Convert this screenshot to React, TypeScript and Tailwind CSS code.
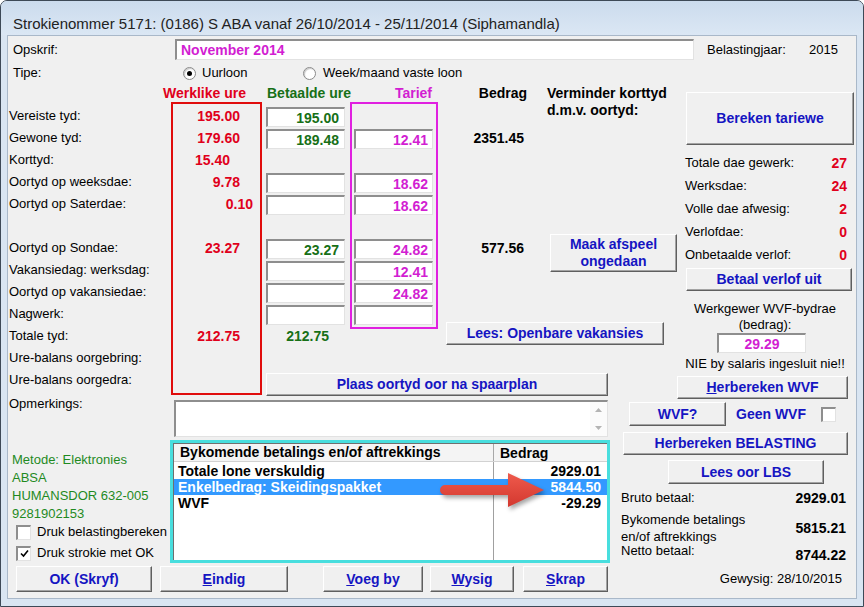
import React from "react";

const RED = "text-[#e0001b]";
const GREEN = "text-[#177017]";
const MAG = "text-[#d21ed2]";

function Btn({ children, className = "" }: { children: React.ReactNode; className?: string }) {
  return (
    <div
      className={`flex shrink-0 items-center justify-center border border-t-white border-l-white border-r-[#5f5f5f] border-b-[#5f5f5f] bg-[#f0f0f0] text-center text-[14px] font-bold leading-[17px] text-[#1515c2] shadow-[inset_-1px_-1px_0_#a3a3a3] ${className}`}
    >
      {children}
    </div>
  );
}

function Field({ value = "", className = "" }: { value?: string; className?: string }) {
  return (
    <div
      className={`flex h-5 items-center border-t-2 border-l-2 border-r border-b border-t-[#8e8e8e] border-l-[#8e8e8e] border-r-[#e2e2e2] border-b-[#e2e2e2] bg-white text-[14px] font-bold leading-none ${className}`}
    >
      {value}
    </div>
  );
}

function Check({ checked = false }: { checked?: boolean }) {
  return (
    <div className="flex h-[15px] w-[15px] shrink-0 items-center justify-center border-t-2 border-l-2 border-r border-b border-t-[#8e8e8e] border-l-[#8e8e8e] border-r-[#e2e2e2] border-b-[#e2e2e2] bg-white">
      {checked && (
        <svg width="9" height="9" viewBox="0 0 9 9">
          <path d="M1 4.5 L3.5 7 L8 1.5" fill="none" stroke="#000" strokeWidth="1.6" />
        </svg>
      )}
    </div>
  );
}

function Radio({ on = false }: { on?: boolean }) {
  return (
    <div className="flex h-[13px] w-[13px] shrink-0 items-center justify-center rounded-full border border-[#8a8a8a] bg-white shadow-[inset_1px_1px_1px_#c8c8c8]">
      {on && <div className="h-[5px] w-[5px] rounded-full bg-black" />}
    </div>
  );
}

const labels = [
  "Vereiste tyd:",
  "Gewone tyd:",
  "Korttyd:",
  "Oortyd op weeksdae:",
  "Oortyd op Saterdae:",
  "",
  "Oortyd op Sondae:",
  "Vakansiedag: werksdag:",
  "Oortyd op vakansiedae:",
  "Nagwerk:",
  "Totale tyd:",
  "Ure-balans oorgebring:",
  "Ure-balans oorgedra:",
];

const werklik: ([string, string] | null)[] = [
  ["195.00", "pr-[20px]"],
  ["179.60", "pr-[20px]"],
  ["15.40", "pr-[30px]"],
  ["9.78", "pr-[20px]"],
  ["0.10", "pr-[7px]"],
  null,
  ["23.27", "pr-[20px]"],
  null,
  null,
  null,
  ["212.75", "pr-[20px]"],
  null,
  null,
];

// string = input with that value, null = nothing
const betaal: (string | null)[] = ["195.00", "189.48", null, "", "", null, "23.27", "", "", ""];
const tarief: (string | null)[] = [null, "12.41", null, "18.62", "18.62", null, "24.82", "12.41", "24.82", ""];

const stats = [
  ["Totale dae gewerk:", "27"],
  ["Werksdae:", "24"],
  ["Volle dae afwesig:", "2"],
  ["Verlofdae:", "0"],
  ["Onbetaalde verlof:", "0"],
];

const items = [
  { name: "Totale lone verskuldig", amount: "2929.01", sel: false },
  { name: "Enkelbedrag: Skeidingspakket", amount: "5844.50", sel: true },
  { name: "WVF", amount: "-29.29", sel: false },
];

export default function App() {
  return (
    <div className="h-[607px] w-[864px] overflow-hidden bg-white font-['Liberation_Sans',Arial,sans-serif]">
      <div className="flex h-full flex-col rounded-t-[7px] border border-[#3d4957] bg-[#d9e5f2]">
        {/* title bar */}
        <div className="h-[34px] shrink-0 rounded-t-[6px] bg-linear-to-b from-[#cbdbed] to-[#dbe7f4] pl-[12px] pt-[14px] text-[15px] leading-[17px] text-[#222]">
          Strokienommer 5171: (0186) S ABA vanaf 26/10/2014 - 25/11/2014 (Siphamandla)
        </div>

        {/* client */}
        <div className="mx-[6px] h-[564px] shrink-0 border border-[#a9b8c9] bg-[#f0f0f0] text-[13px] leading-[16px] text-black">
          {/* Opskrif */}
          <div className="flex h-[24px] items-center pt-[3px]">
            <div className="w-[167px] pl-[5px]">Opskrif:</div>
            <Field value="November 2014" className={`h-[21px] w-[519px] pl-[4px] ${MAG}`} />
            <div className="ml-[13px] w-[102px]">Belastingjaar:</div>
            <div>2015</div>
          </div>

          {/* Tipe */}
          <div className="flex h-[24px] items-center pt-[2px]">
            <div className="w-[175px] pl-[5px]">Tipe:</div>
            <Radio on />
            <div className="ml-[6px] w-[101px]">Uurloon</div>
            <Radio />
            <div className="ml-[7px]">Week/maand vaste loon</div>
          </div>

          {/* main grid */}
          <div className="flex h-[315px]">
            <div className="flex w-[669px]">
              <div className="w-[155px] pt-[21px]">
                {labels.map((l, i) => (
                  <div key={i} className="flex h-[22px] items-center whitespace-nowrap pl-[1px]">
                    {l}
                  </div>
                ))}
              </div>

              <div className="w-[101px]">
                <div className={`flex h-[18px] items-center whitespace-nowrap text-[14px] font-bold ${RED}`}>Werklike ure</div>
                <div className="ml-[8px] h-[293px] w-[91px] border-2 border-[#e00c0c] pt-[1px]">
                  {werklik.map((v, i) => (
                    <div key={i} className={`flex h-[22px] items-center justify-end text-[14px] font-bold ${RED} ${v ? v[1] : ""}`}>
                      {v ? v[0] : ""}
                    </div>
                  ))}
                </div>
              </div>

              <div className="flex w-[413px] flex-col">
                <div className="flex h-[263px]">
                  <div className="w-[86px]">
                    <div className={`flex h-[18px] items-center whitespace-nowrap pl-[3px] text-[14px] font-bold ${GREEN}`}>Betaalde ure</div>
                    <div className="pt-[3px]">
                      {betaal.map((v, i) => (
                        <div key={i} className="flex h-[22px] items-end">
                          {v !== null && <Field value={v} className={`ml-[2px] w-[79px] justify-end pr-[5px] ${GREEN}`} />}
                        </div>
                      ))}
                      <div className={`flex h-[22px] items-center justify-end pr-[21px] text-[14px] font-bold ${GREEN}`}>212.75</div>
                    </div>
                  </div>

                  <div className="w-[90px]">
                    <div className={`flex h-[18px] items-center justify-end pr-[8px] text-[14px] font-bold ${MAG}`}>Tarief</div>
                    <div className="h-[227px] w-[88px] border-2 border-[#e020e0] pt-[1px]">
                      {tarief.map((v, i) => (
                        <div key={i} className="flex h-[22px] items-end">
                          {v !== null && <Field value={v} className={`ml-[2px] w-[79px] justify-end pr-[4px] ${MAG}`} />}
                        </div>
                      ))}
                    </div>
                  </div>

                  <div className="flex w-[237px] flex-col">
                    <div className="flex h-[238px]">
                      <div className="w-[100px] text-[14px] font-bold">
                        <div className="flex h-[18px] items-center justify-end pr-[13px]">Bedrag</div>
                        <div className="mt-[25px] flex h-[22px] items-center justify-end pr-[16px]">2351.45</div>
                        <div className="mt-[88px] flex h-[22px] items-center justify-end pr-[16px]">577.56</div>
                      </div>
                      <div className="w-[137px]">
                        <div className="pl-[7px] pt-[1px] text-[14px] font-bold leading-[17px] whitespace-nowrap">
                          Verminder korttyd
                          <br />
                          d.m.v. oortyd:
                        </div>
                        <Btn className="ml-[10px] mt-[115px] h-[38px] w-[127px]">
                          Maak afspeel
                          <br />
                          ongedaan
                        </Btn>
                      </div>
                    </div>
                    <Btn className="ml-[6px] h-[23px] w-[218px]">Lees: Openbare vakansies</Btn>
                  </div>
                </div>
                <Btn className="ml-[2px] mt-[26px] h-[23px] w-[342px]">Plaas oortyd oor na spaarplan</Btn>
              </div>
            </div>

            {/* right column, upper */}
            <div className="flex w-[179px] flex-col">
              <Btn className="ml-[9px] mt-[8px] h-[53px] w-[168px]">Bereken tariewe</Btn>
              <div className="mt-[6px]">
                {stats.map(([l, v]) => (
                  <div key={l} className="flex h-[23px] items-center justify-between pl-[8px] pr-[9px]">
                    <span>{l}</span>
                    <span className={`text-[14px] font-bold ${RED}`}>{v}</span>
                  </div>
                ))}
              </div>
              <Btn className="ml-[9px] mt-[2px] h-[23px] w-[166px]">Betaal verlof uit</Btn>
              <div className="mt-[10px] pr-[3px] text-center">
                Werkgewer WVF-bydrae
                <br />
                (bedrag):
              </div>
              <Field value="29.29" className={`ml-[40px] w-[89px] justify-center ${MAG}`} />
              <div className="mt-[2px] whitespace-nowrap pr-[3px] text-center leading-[18px]">NIE by salaris ingesluit nie!!</div>
              <Btn className="mt-[3px] h-[23px] w-[171px]">
                <span>
                  <span className="underline">H</span>erbereken WVF
                </span>
              </Btn>
            </div>
          </div>

          {/* lower part */}
          <div className="flex h-[199px]">
            <div className="flex w-[607px] flex-col">
              <div className="flex h-[38px]">
                <div className="-mt-[3px] w-[166px] pl-[1px]">Opmerkings:</div>
                <div className="mt-[1px] flex h-[37px] w-[434px] border-t-2 border-l-2 border-r border-b border-t-[#8e8e8e] border-l-[#8e8e8e] border-r-[#e2e2e2] border-b-[#e2e2e2] bg-white">
                  <div className="flex-1" />
                  <div className="flex w-[17px] flex-col items-center justify-between bg-[#fbfbfb] py-[6px]">
                    <svg width="7" height="4" viewBox="0 0 7 4">
                      <path d="M0 4 L3.5 0 L7 4Z" fill="#b4b4b4" />
                    </svg>
                    <svg width="7" height="4" viewBox="0 0 7 4">
                      <path d="M0 0 L3.5 4 L7 0Z" fill="#b4b4b4" />
                    </svg>
                  </div>
                </div>
              </div>

              <div className="mt-[3px] flex h-[123px]">
                <div className="w-[162px] overflow-hidden whitespace-nowrap pt-[11px]">
                  <div className="pl-[4px] leading-[18px] text-[#1f8a1f]">
                    <div>Metode: Elektronies</div>
                    <div>ABSA</div>
                    <div>HUMANSDOR 632-005</div>
                    <div>9281902153</div>
                  </div>
                  <div className="flex h-[18px] items-center pl-[8px]">
                    <Check />
                    <span className="ml-[6px]">Druk belastingbereken</span>
                  </div>
                  <div className="mt-[3px] flex h-[18px] items-center pl-[8px]">
                    <Check checked />
                    <span className="ml-[6px]">Druk strokie met OK</span>
                  </div>
                </div>

                <div className="h-[123px] w-[440px] border-[3px] border-[#48dede] bg-white">
                  <div className="relative flex h-full flex-col border-t border-l border-[#6f6f6f] text-[14px] font-bold">
                    <div className="flex h-[18px] shrink-0 items-center border-b border-[#d2d2d2] bg-[#f4f4f4]">
                      <div className="w-[320px] border-r border-[#a8a8a8] pl-[6px] leading-[17px]">Bykomende betalings en/of aftrekkings</div>
                      <div className="pl-[6px]">Bedrag</div>
                    </div>
                    <div className="h-[1px] shrink-0 w-[320px] border-r border-[#a0a0a0]" />
                    {items.map((it) => (
                      <div key={it.name} className={`flex h-[16px] shrink-0 items-center ${it.sel ? "bg-[#3399ff] text-white" : ""}`}>
                        <div className={`h-full w-[320px] border-r pl-[4px] leading-[16px] ${it.sel ? "border-[#3399ff]" : "border-[#a0a0a0]"}`}>{it.name}</div>
                        <div className="flex-1 pr-[6px] text-right leading-[16px]">{it.amount}</div>
                      </div>
                    ))}
                    <div className="w-[320px] flex-1 border-r border-[#a0a0a0]" />

                    <svg
                      className="absolute left-[264px] top-[24px] drop-shadow-[2px_3px_2px_rgba(0,0,0,0.35)]"
                      width="112"
                      height="44"
                      viewBox="0 0 112 44"
                    >
                      <defs>
                        <linearGradient id="ar" x1="0" y1="0" x2="0" y2="1">
                          <stop offset="0" stopColor="#ef5a4c" />
                          <stop offset="1" stopColor="#d3382f" />
                        </linearGradient>
                      </defs>
                      <path
                        d="M7 17 L70 17 L70 5 L106 22 L70 39 L70 27 L7 27 A5 5 0 0 1 7 17 Z"
                        fill="url(#ar)"
                      />
                    </svg>
                  </div>
                </div>
              </div>

              <div className="mt-[3px] flex h-[26px]">
                <Btn className="ml-[8px] h-[26px] w-[136px]">OK (Skryf)</Btn>
                <Btn className="ml-[8px] h-[26px] w-[128px]">
                  <span>
                    <span className="underline">E</span>indig
                  </span>
                </Btn>
                <Btn className="ml-[35px] h-[26px] w-[100px]">
                  <span>
                    <span className="underline">V</span>oeg by
                  </span>
                </Btn>
                <Btn className="ml-[7px] h-[26px] w-[84px]">
                  <span>
                    <span className="underline">W</span>ysig
                  </span>
                </Btn>
                <Btn className="ml-[9px] h-[26px] w-[85px]">
                  <span>
                    <span className="underline">S</span>krap
                  </span>
                </Btn>
              </div>
            </div>

            {/* right column, lower */}
            <div className="flex w-[241px] flex-col pt-[3px]">
              <div className="flex h-[24px] items-center">
                <Btn className="ml-[14px] h-[24px] w-[97px]">WVF?</Btn>
                <span className="ml-[10px] text-[14px] font-bold text-[#1515c2]">Geen WVF</span>
                <div className="ml-[15px]">
                  <Check />
                </div>
              </div>
              <Btn className="ml-[8px] mt-[6px] h-[23px] w-[225px]">Herbereken BELASTING</Btn>
              <Btn className="ml-[53px] mt-[5px] h-[24px] w-[156px]">Lees oor LBS</Btn>
              <div className="mt-[5px] flex h-[18px] items-center justify-between pl-[6px] pr-[10px]">
                <span>Bruto betaal:</span>
                <span className="text-[14px] font-bold">2929.01</span>
              </div>
              <div className="mt-[4px] flex items-center justify-between pl-[6px] pr-[10px]">
                <span className="leading-[17px]">
                  Bykomende betalings
                  <br />
                  en/of aftrekkings
                </span>
                <span className="text-[14px] font-bold">5815.21</span>
              </div>
              <div className="-mt-[2px] flex items-start justify-between pl-[6px] pr-[10px]">
                <span>Netto betaal:</span>
                <span className="mt-[4px] text-[14px] font-bold">8744.22</span>
              </div>
              <div className="mt-[8px] pr-[14px] text-right">Gewysig: 28/10/2015</div>
            </div>
          </div>
        </div>
      </div>
    </div>
  );
}
